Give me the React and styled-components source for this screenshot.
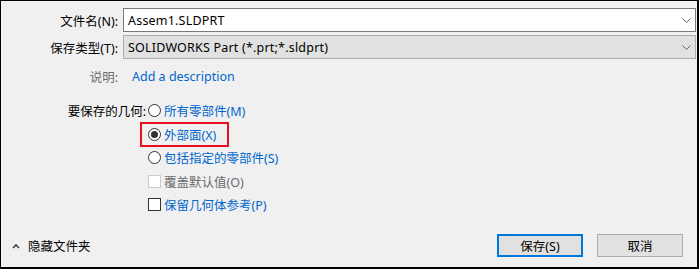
import styled, { createGlobalStyle } from "styled-components";

const GlobalStyle = createGlobalStyle`
  html, body {
    margin: 0;
    padding: 0;
    background: #ffffff;
  }
  body {
    font-family: "Segoe UI", "Noto Sans", "Noto Sans CJK SC", sans-serif;
    font-size: 12.5px;
    color: #000;
  }
`;

const Dialog = styled.div`
  box-sizing: border-box;
  width: 699px;
  height: 269px;
  background: #f0f0f0;
  border-style: solid;
  border-color: #000;
  border-width: 1px 2px 2px 1px;
  display: flex;
  flex-direction: column;
  padding-top: 7px;
`;

const Form = styled.div`
  display: grid;
  grid-template-columns: 117px 1fr;
  grid-template-rows: 24px 24px 28px;
  column-gap: 5px;
  row-gap: 3px;
  padding-right: 1px;
`;

const Label = styled.div`
  display: flex;
  align-items: center;
  justify-content: flex-end;
  white-space: nowrap;
  color: ${({ muted }) => (muted ? "#6d6d6d" : "#000")};
`;

const Field = styled.div`
  box-sizing: border-box;
  display: flex;
  align-items: center;
  justify-content: space-between;
  padding: 0 4px 0 4px;
  border: 1px solid ${({ filled }) => (filled ? "#adadad" : "#7a7a7a")};
  background: ${({ filled }) => (filled ? "#e1e1e1" : "#ffffff")};
  white-space: nowrap;
  letter-spacing: 0.2px;
`;

const Link = styled.div`
  display: flex;
  align-items: center;
  padding-left: 9px;
  color: #0066cc;
`;

const Geometry = styled.div`
  display: flex;
  margin-top: 9px;
`;

const GeoLabel = styled.div`
  width: 145px;
  height: 23.5px;
  display: flex;
  align-items: center;
  justify-content: flex-end;
  white-space: nowrap;
  padding-right: 2px;
`;

const Options = styled.div`
  display: flex;
  flex-direction: column;
  align-items: flex-start;
`;

const Option = styled.div`
  position: relative;
  height: 23.5px;
  display: flex;
  align-items: center;
  gap: 3px;
  white-space: nowrap;
  color: ${({ disabled }) => (disabled ? "#6d6d6d" : "#0066cc")};
  ${({ highlighted }) =>
    highlighted &&
    `
    &::after {
      content: "";
      position: absolute;
      left: -8px;
      right: -13px;
      top: -1px;
      bottom: -1px;
      border: 2px solid #e81123;
    }
  `}
`;

const Radio = styled.span`
  box-sizing: border-box;
  width: 13px;
  height: 13px;
  border-radius: 50%;
  border: 1px solid #333;
  background: #fff;
  display: flex;
  align-items: center;
  justify-content: center;
  &::after {
    content: "";
    width: 7px;
    height: 7px;
    border-radius: 50%;
    background: ${({ checked }) => (checked ? "#333" : "transparent")};
  }
`;

const Check = styled.span`
  box-sizing: border-box;
  width: 13px;
  height: 13px;
  border: 1px solid ${({ disabled }) => (disabled ? "#cccccc" : "#333")};
  background: #fff;
`;

const Footer = styled.div`
  margin-top: auto;
  display: flex;
  align-items: center;
  justify-content: space-between;
  padding: 0 14px 10px 11px;
`;

const Toggle = styled.div`
  display: flex;
  align-items: center;
  gap: 8px;
  color: #000;
`;

const Buttons = styled.div`
  display: flex;
  gap: 14px;
`;

const Button = styled.button`
  box-sizing: border-box;
  width: 86px;
  height: 23px;
  font: inherit;
  color: #000;
  background: #e1e1e1;
  border: ${({ primary }) => (primary ? "2px solid #0078d7" : "1px solid #adadad")};
  padding: 0;
`;

const Chevron = () => (
  <svg width="9" height="5" viewBox="0 0 9 5">
    <polyline points="0.5,0.5 4.5,4.5 8.5,0.5" fill="none" stroke="#666" strokeWidth="1" />
  </svg>
);

const ChevronUp = () => (
  <svg width="8" height="6" viewBox="0 0 8 6">
    <polyline points="1,5 4,2 7,5" fill="none" stroke="#444" strokeWidth="1.6" />
  </svg>
);

export default function App() {
  return (
    <>
      <GlobalStyle />
      <Dialog>
        <Form>
          <Label>文件名(N):</Label>
          <Field>
            Assem1.SLDPRT
            <Chevron />
          </Field>
          <Label>保存类型(T):</Label>
          <Field filled>
            SOLIDWORKS Part (*.prt;*.sldprt)
            <Chevron />
          </Field>
          <Label muted>说明:</Label>
          <Link>Add a description</Link>
        </Form>

        <Geometry>
          <GeoLabel>要保存的几何:</GeoLabel>
          <Options>
            <Option>
              <Radio />
              所有零部件(M)
            </Option>
            <Option highlighted>
              <Radio checked />
              外部面(X)
            </Option>
            <Option>
              <Radio />
              包括指定的零部件(S)
            </Option>
            <Option disabled>
              <Check disabled />
              覆盖默认值(O)
            </Option>
            <Option>
              <Check />
              保留几何体参考(P)
            </Option>
          </Options>
        </Geometry>

        <Footer>
          <Toggle>
            <ChevronUp />
            隐藏文件夹
          </Toggle>
          <Buttons>
            <Button primary>保存(S)</Button>
            <Button>取消</Button>
          </Buttons>
        </Footer>
      </Dialog>
    </>
  );
}
